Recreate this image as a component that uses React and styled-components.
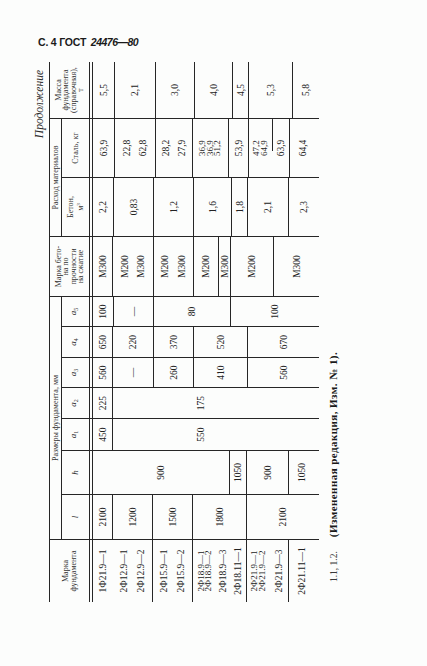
import React from 'react'
import styled, { createGlobalStyle } from 'styled-components'

const INK = '#262626'

const GlobalStyle = createGlobalStyle`
    *, *::before, *::after {
        box-sizing: border-box;
    }
    html, body {
        margin: 0;
        padding: 0;
        background: #fcfdfc;
    }
    body {
        font-family: 'Liberation Serif', 'Times New Roman', serif;
        color: #1f1f1f;
    }
`

const Page = styled.div`
    width: 427px;
    height: 666px;
    padding: 36px 0 0 33px;
    overflow: hidden;
`

const RunningHead = styled.div`
    margin-left: 5px;
    font-family: 'Liberation Sans', Arial, sans-serif;
    font-weight: 700;
    font-size: 10.5px;
    line-height: 12px;
    letter-spacing: -0.2px;
    color: #1a1a1a;
    white-space: nowrap;
    span {
        margin-left: 2px;
        font-style: italic;
        letter-spacing: -0.5px;
    }
`

// the page is printed sideways: lay the sheet out normally, then turn it
const Turned = styled.div`
    width: 308px;
    height: 540px;
    margin-top: 14px;
    overflow: hidden;
`

const Sheet = styled.div`
    width: 540px;
    height: 308px;
    transform-origin: 0 0;
    transform: translateY(540px) rotate(-90deg);
    display: flex;
    flex-direction: column;
`

const Continued = styled.div`
    height: 16px;
    padding-right: 8px;
    text-align: right;
    font-style: italic;
    font-size: 11.5px;
    line-height: 12px;
    color: #2a2a2a;
`

const Table = styled.div`
    display: flex;
    height: 270px;
    border-top: 1px solid ${INK};
`

const Group = styled.div`
    display: flex;
    flex-direction: column;
    flex: none;
`

const GroupTitle = styled.div`
    height: 12px;
    border-left: 1px solid ${INK};
    border-bottom: 1px solid ${INK};
    font-size: 8px;
    line-height: 11px;
    text-align: center;
    white-space: nowrap;
    color: #333;
`

const GroupRow = styled.div`
    display: flex;
    flex: 1;
`

const Col = styled.div`
    display: flex;
    flex-direction: column;
    flex: none;
    width: ${p => p.$w}px;
    border-left: ${p => (p.$edge ? `1px solid ${INK}` : 'none')};
`

const Head = styled.div`
    flex: none;
    height: ${p => p.$h}px;
    border-bottom: 4px double ${INK};
    display: flex;
    flex-direction: column;
    align-items: center;
    justify-content: center;
    font-size: 8px;
    line-height: 7.5px;
    text-align: center;
    white-space: nowrap;
    color: #333;
    sup {
        font-size: 5px;
        vertical-align: 3px;
    }
`

const Var = styled.span`
    font-style: italic;
    font-size: 9px;
    sub {
        font-style: normal;
        font-size: 6px;
        vertical-align: -2px;
    }
`

const Stack = styled.div`
    display: flex;
    flex-direction: column;
    flex: 1;
`

const Cell = styled.div`
    flex: none;
    height: ${p => p.$h}px;
    display: flex;
    flex-direction: column;
    align-items: center;
    justify-content: ${p => (p.$tight ? 'center' : 'space-evenly')};
    border-top: ${p => (p.$line && !p.$partial ? `1px solid ${INK}` : 'none')};
    background: ${p =>
        p.$partial ? `linear-gradient(${INK}, ${INK}) right top / 55% 1px no-repeat` : 'none'};
    font-size: ${p => (p.$tight ? '9px' : '9.5px')};
    line-height: ${p => (p.$tight ? '7.5px' : '10px')};
    white-space: nowrap;
    color: #222;
`

const Footnote = styled.div`
    margin-top: 8px;
    padding-left: 20px;
    font-size: 11px;
    line-height: 13px;
    white-space: nowrap;
`

const Clause = styled.span`
    font-size: 9.5px;
    margin-right: 14px;
    color: #3a3a3a;
`

const Note = styled.b`
    font-weight: 700;
    letter-spacing: 0.45px;
    color: #1a1a1a;
`

const A = ({ n }) => (
    <Var>
        a<sub>{n}</sub>
    </Var>
)

// cells: [page position where the cell ends, text or lines, flags]
// flags: n = no rule above, t = tightly set lines, p = short rule above
const NAMES = {
    w: 62,
    head: ['Марка', 'фундамента'],
    cells: [
        [113, '1Ф21.9—1'],
        [152, ['2Ф12.9—1', '2Ф12.9—2'], 'n'],
        [192, ['2Ф15.9—1', '2Ф15.9—2']],
        [217, ['2Ф18.9—1', '2Ф18.9—2'], 't'],
        [229, '2Ф18.9—3', 'n'],
        [246, '2Ф18.11—1', 'n'],
        [270, ['2Ф21.9—1', '2Ф21.9—2'], 't'],
        [288, '2Ф21.9—3', 'n'],
        [314, '2Ф21.11—1'],
        [319, '', 'n'],
    ],
}

const SIZES = [
    { w: 45, head: <Var>l</Var>, cells: [[112, '2100'], [152, '1200'], [192, '1500'], [246, '1800'], [319, '2100']] },
    { w: 44, head: <Var>h</Var>, cells: [[229, '900'], [246, '1050'], [288, '900'], [314, '1050'], [319, '', 'n']] },
    { w: 32, head: <A n={1} />, cells: [[112, '450'], [288, '550'], [319, '', 'n']] },
    { w: 31, head: <A n={2} />, cells: [[112, '225'], [288, '175'], [319, '', 'n']] },
    { w: 30, head: <A n={3} />, cells: [[112, '560'], [153, '—'], [193, '260'], [247, '410'], [319, '560']] },
    { w: 31, head: <A n={4} />, cells: [[112, '650'], [153, '220'], [193, '370'], [247, '520'], [319, '670']] },
    { w: 30, head: <A n={5} />, cells: [[113, '100'], [153, '—'], [230, '80'], [319, '100']] },
]

const GRADE = {
    w: 60,
    head: ['Марка бето-', 'на по', 'прочности', 'на сжатие'],
    cells: [
        [112, 'М300'],
        [153, ['М200', 'М300']],
        [193, ['М200', 'М300']],
        [218, 'М200'],
        [230, 'М300'],
        [273, 'М200'],
        [319, 'М300'],
    ],
}

const MATERIALS = [
    {
        w: 59,
        head: ['Бетон,', <>м<sup>3</sup></>],
        cells: [[113, '2,2'], [153, '0,83'], [193, '1,2'], [231, '1,6'], [247, '1,8'], [288, '2,1'], [319, '2,3']],
    },
    {
        w: 59,
        head: ['Сталь, кг'],
        cells: [
            [114, '63,9'],
            [155, ['22,8', '62,8']],
            [192, ['28,2', '27,9']],
            [228, ['36,9', '36,9', '51,2'], 't'],
            [248, '53,9'],
            [272, ['47,2', '64,9'], 't'],
            [289, '63,9', 'p'],
            [316, '64,4'],
            [319, '', 'n'],
        ],
    },
]

const MASS = {
    w: 57,
    head: ['Масса', 'фундамента', '(справочная),', 'т'],
    cells: [[114, '5,5'], [155, '2,1'], [194, '3,0'], [232, '4,0'], [248, '4,5'], [292, '5,3'], [319, '5,8']],
}

const BODY_START = 93

const Cells = ({ cells }) => {
    let start = BODY_START
    return (
        <Stack>
            {cells.map(([end, text, flags = ''], i) => {
                const h = end - start
                start = end
                const lines = Array.isArray(text) ? text : [text]
                return (
                    <Cell
                        key={i}
                        $h={h}
                        $line={i > 0 && !flags.includes('n')}
                        $tight={flags.includes('t')}
                        $partial={flags.includes('p')}
                    >
                        {lines.map((l, j) => (
                            <span key={j}>{l}</span>
                        ))}
                    </Cell>
                )
            })}
        </Stack>
    )
}

const Column = ({ col, sub, edge = true }) => (
    <Col $w={col.w} $edge={edge}>
        <Head $h={sub ? 31 : 43}>
            {Array.isArray(col.head) ? col.head.map((l, i) => <div key={i}>{l}</div>) : col.head}
        </Head>
        <Cells cells={col.cells} />
    </Col>
)

const ColumnGroup = ({ title, cols }) => (
    <Group>
        <GroupTitle>{title}</GroupTitle>
        <GroupRow>
            {cols.map((c, i) => (
                <Column key={i} col={c} sub />
            ))}
        </GroupRow>
    </Group>
)

const App = () => {
    return (
        <Page>
            <GlobalStyle />
            <RunningHead>
                С. 4 ГОСТ <span>24476—80</span>
            </RunningHead>
            <Turned>
                <Sheet>
                    <Continued>Продолжение</Continued>
                    <Table>
                        <Column col={NAMES} edge={false} />
                        <ColumnGroup title="Размеры фундамента, мм" cols={SIZES} />
                        <Column col={GRADE} />
                        <ColumnGroup title="Расход материалов" cols={MATERIALS} />
                        <Column col={MASS} />
                    </Table>
                    <Footnote>
                        <Clause>1.1, 1.2.</Clause>
                        <Note>(Измененная редакция, Изм. № 1).</Note>
                    </Footnote>
                </Sheet>
            </Turned>
        </Page>
    )
}

export default App
